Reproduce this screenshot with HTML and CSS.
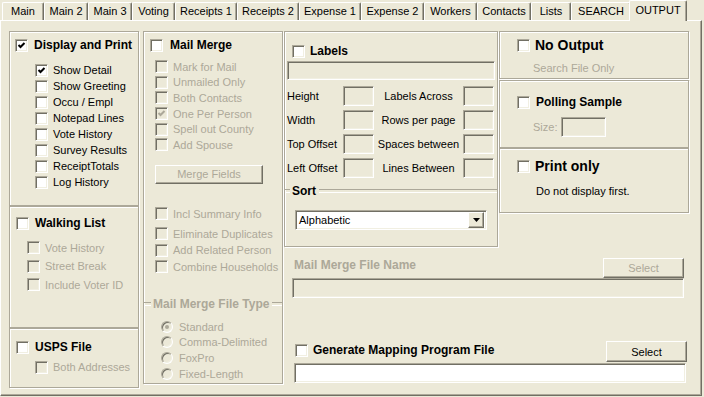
FILE: index.html
```html
<!DOCTYPE html>
<html lang="en">

<head>
    <meta charset="UTF-8">
    <meta name="viewport" content="width=device-width, initial-scale=1.0">
    <title>Output</title>
    <link rel="stylesheet" href="styles.css">
</head>

<body>
    <div class="tabs">
        <div class="tab">Main</div>
        <div class="tab">Main 2</div>
        <div class="tab">Main 3</div>
        <div class="tab">Voting</div>
        <div class="tab">Receipts 1</div>
        <div class="tab">Receipts 2</div>
        <div class="tab">Expense 1</div>
        <div class="tab">Expense 2</div>
        <div class="tab">Workers</div>
        <div class="tab">Contacts</div>
        <div class="tab">Lists</div>
        <div class="tab">SEARCH</div>
        <div class="tab active">OUTPUT</div>
    </div>

    <div class="page">
        <!-- coluna da esquerda -->
        <div class="col-left">
            <div class="frame display">
                <div class="row head">
                    <span class="cb"><svg width="11" height="11" viewBox="0 0 11 11"><path d="M2.5 5l2 2 4-4" fill="none" stroke="currentColor" stroke-width="2"/></svg></span>
                    <b>Display and Print</b>
                </div>
                <div class="list">
                    <div class="row"><span class="cb"><svg width="11" height="11" viewBox="0 0 11 11"><path d="M2.5 5l2 2 4-4" fill="none" stroke="currentColor" stroke-width="2"/></svg></span><span>Show Detail</span></div>
                    <div class="row"><span class="cb"></span><span>Show Greeting</span></div>
                    <div class="row"><span class="cb"></span><span>Occu / Empl</span></div>
                    <div class="row"><span class="cb"></span><span>Notepad Lines</span></div>
                    <div class="row"><span class="cb"></span><span>Vote History</span></div>
                    <div class="row"><span class="cb"></span><span>Survey Results</span></div>
                    <div class="row"><span class="cb"></span><span>ReceiptTotals</span></div>
                    <div class="row"><span class="cb"></span><span>Log History</span></div>
                </div>
            </div>

            <div class="frame walking">
                <div class="row head"><span class="cb"></span><b>Walking List</b></div>
                <div class="list dis">
                    <div class="row"><span class="cb"></span><span>Vote History</span></div>
                    <div class="row"><span class="cb"></span><span>Street Break</span></div>
                    <div class="row"><span class="cb"></span><span>Include Voter ID</span></div>
                </div>
            </div>

            <div class="frame usps">
                <div class="row head"><span class="cb"></span><b>USPS File</b></div>
                <div class="list dis">
                    <div class="row"><span class="cb"></span><span>Both Addresses</span></div>
                </div>
            </div>
        </div>

        <!-- mail merge -->
        <div class="frame merge">
            <div class="row head"><span class="cb"></span><b>Mail Merge</b></div>
            <div class="list list1 dis">
                <div class="row"><span class="cb"></span><span>Mark for Mail</span></div>
                <div class="row"><span class="cb"></span><span>Unmailed Only</span></div>
                <div class="row"><span class="cb"></span><span>Both Contacts</span></div>
                <div class="row"><span class="cb"><svg width="11" height="11" viewBox="0 0 11 11"><path d="M2.5 5l2 2 4-4" fill="none" stroke="currentColor" stroke-width="2"/></svg></span><span>One Per Person</span></div>
                <div class="row"><span class="cb"></span><span>Spell out County</span></div>
                <div class="row"><span class="cb"></span><span>Add Spouse</span></div>
            </div>
            <div class="btn dis merge-fields">Merge Fields</div>
            <div class="row incl dis"><span class="cb"></span><span>Incl Summary Info</span></div>
            <div class="list list2 dis">
                <div class="row"><span class="cb"></span><span>Eliminate Duplicates</span></div>
                <div class="row"><span class="cb"></span><span>Add Related Person</span></div>
                <div class="row"><span class="cb"></span><span>Combine Households</span></div>
            </div>
            <div class="legend dis">Mail Merge File Type</div>
            <div class="list radios dis">
                <div class="row"><span class="radio on"></span><span>Standard</span></div>
                <div class="row"><span class="radio"></span><span>Comma-Delimited</span></div>
                <div class="row"><span class="radio"></span><span>FoxPro</span></div>
                <div class="row"><span class="radio"></span><span>Fixed-Length</span></div>
            </div>
        </div>

        <div class="right">
            <div class="right-top">
                <!-- etiquetas + ordenacao -->
                <div class="frame labels">
                    <div class="row head"><span class="cb"></span><b>Labels</b></div>
                    <div class="field labels-name"></div>
                    <div class="label-grid">
                        <span>Height</span><span class="field box"></span>
                        <span class="mid">Labels Across</span><span class="field box"></span>
                        <span>Width</span><span class="field box"></span>
                        <span class="mid">Rows per page</span><span class="field box"></span>
                        <span>Top Offset</span><span class="field box"></span>
                        <span class="mid">Spaces between</span><span class="field box"></span>
                        <span>Left Offset</span><span class="field box"></span>
                        <span class="mid">Lines Between</span><span class="field box"></span>
                    </div>
                    <div class="legend sort">Sort</div>
                    <div class="field white select">
                        <span>Alphabetic</span>
                        <span class="btn arrow"><svg width="7" height="4" viewBox="0 0 7 4"><path d="M0 0h7l-3.5 4z" fill="#000"/></svg></span>
                    </div>
                </div>

                <div class="col-opts">
                    <div class="frame noout">
                        <div class="row head big"><span class="cb"></span><b>No Output</b></div>
                        <div class="note dis">Search File Only</div>
                    </div>
                    <div class="frame polling">
                        <div class="row head"><span class="cb"></span><b>Polling Sample</b></div>
                        <div class="size-row dis"><span>Size:</span><span class="field size-box"></span></div>
                    </div>
                    <div class="frame print">
                        <div class="row head big"><span class="cb"></span><b>Print only</b></div>
                        <div class="note">Do not display first.</div>
                    </div>
                </div>
            </div>

            <!-- arquivos -->
            <div class="files">
                <div class="file-row dis">
                    <b class="file-label">Mail Merge File Name</b>
                    <span class="btn select-btn">Select</span>
                </div>
                <div class="field file-field"></div>

                <div class="file-row map-row">
                    <div class="row head"><span class="cb"></span><b>Generate Mapping Program File</b></div>
                    <span class="btn select-btn map-btn">Select</span>
                </div>
                <div class="field white file-field map-field"></div>
            </div>
        </div>
    </div>
</body>

</html>
```

FILE: styles.css
```css
* {
    box-sizing: border-box;
}

body {
    margin: 0;
    width: 704px;
    height: 397px;
    overflow: hidden;
    background: #ece9d8;
    font-family: "Liberation Sans", Arial, sans-serif;
    font-size: 11px;
    color: #000;
}

/* abas */
.tabs {
    display: flex;
    height: 20px;
    padding-left: 2px;
}

.tab {
    height: 18px;
    margin-top: 2px;
    border-top: 1px solid #fff;
    border-left: 1px solid #fff;
    border-right: 1px solid #716f64;
    box-shadow: inset -1px 0 #aca899;
    border-radius: 2px 2px 0 0;
    text-align: center;
    line-height: 17px;
    white-space: nowrap;
}

.tab:nth-child(1) { width: 42px; }
.tab:nth-child(2) { width: 44px; }
.tab:nth-child(3) { width: 44px; }
.tab:nth-child(4) { width: 43px; }
.tab:nth-child(5) { width: 62px; }
.tab:nth-child(6) { width: 62px; }
.tab:nth-child(7) { width: 62px; }
.tab:nth-child(8) { width: 63px; }
.tab:nth-child(9) { width: 53px; }
.tab:nth-child(10) { width: 54px; }
.tab:nth-child(11) { width: 40px; }
.tab:nth-child(12) { width: 60px; }

.tab.active {
    position: relative; /* fica por cima da borda da pagina */
    z-index: 1;
    width: 58px;
    height: 21px;
    margin: 0 -2px -1px;
    background: #ece9d8;
    line-height: 18px;
}

/* pagina */
.page {
    display: flex;
    width: 702px;
    height: 376px;
    padding: 10px 0 0 8px;
    border-top: 1px solid #fff;
    border-left: 1px solid #fff;
    border-right: 1px solid #716f64;
    border-bottom: 1px solid #716f64;
    box-shadow: inset -1px -1px #aca899;
}

.frame {
    border: 1px solid #aca899;
    box-shadow: inset 1px 1px #fff, 1px 1px #fff;
}

.row {
    display: flex;
    align-items: center;
    height: 16px;
    white-space: nowrap;
}

.row .cb + span {
    margin-left: 5px;
}

.head b {
    font-size: 12px;
    margin-left: 6px;
}

.head.big b {
    font-size: 14px;
    margin-left: 5px;
}

.dis {
    color: #aca899;
}

/* checkbox classico */
.cb {
    display: flex;
    flex: none;
    width: 13px;
    height: 13px;
    background: #fff;
    border: 1px solid;
    border-color: #aca899 #fff #fff #aca899;
    box-shadow: inset 1px 1px #716f64, inset -1px -1px #f1efe2;
}

.dis .cb {
    background: #ece9d8;
}

.radio {
    display: flex;
    align-items: center;
    justify-content: center;
    flex: none;
    width: 12px;
    height: 12px;
    border-radius: 50%;
    background: #ece9d8;
    border: 1px solid;
    border-color: #aca899 #fff #fff #aca899;
    box-shadow: inset 1px 1px #716f64, inset -1px -1px #f1efe2;
}

.radio.on::after {
    content: '';
    width: 4px;
    height: 4px;
    border-radius: 50%;
    background: #aca899;
}

.radio + span {
    margin-left: 6px;
}

.btn {
    display: flex;
    align-items: center;
    justify-content: center;
    background: #ece9d8;
    border: 1px solid;
    border-color: #fff #716f64 #716f64 #fff;
    box-shadow: inset -1px -1px #aca899;
}

.field {
    background: #ece9d8;
    border: 1px solid;
    border-color: #aca899 #fff #fff #aca899;
    box-shadow: inset 1px 1px #716f64, inset -1px -1px #f1efe2;
}

.field.white {
    background: #fff;
}

.legend {
    display: flex;
    align-items: center;
    height: 14px;
    font-size: 12px;
    font-weight: bold;
    white-space: nowrap;
}

.legend::before,
.legend::after {
    content: '';
    height: 2px;
    border-top: 1px solid #aca899;
    border-bottom: 1px solid #fff;
}

.legend::before {
    width: 7px;
    margin-right: 2px;
}

.legend::after {
    flex: 1;
    margin-left: 3px;
}

/* coluna esquerda */
.col-left {
    display: flex;
    flex-direction: column;
    width: 130px;
}

.display {
    height: 175px;
}

.display .head {
    margin: 5px 0 0 5px;
}

.display .list {
    margin: 9px 0 0 25px;
}

.walking {
    height: 122px;
}

.walking .head {
    margin: 7px 0 0 6px;
}

.walking .list {
    margin: 6px 0 0 17px;
}

.walking .row {
    height: 18.5px;
}

.usps {
    height: 60px;
}

.usps .head {
    margin: 10px 0 0 6px;
}

.usps .list {
    margin: 4px 0 0 25px;
}

/* mail merge */
.merge {
    width: 140px;
    height: 353px;
    margin-left: 4px;
}

.merge .head {
    margin: 5px 0 0 6px;
}

.merge .head b {
    margin-left: 7px;
}

.merge .list1 {
    margin: 6px 0 0 11px;
}

.merge .list1 .row {
    height: 15.6px;
}

.merge-fields {
    width: 108px;
    height: 19px;
    margin: 12px 0 0 11px;
}

.incl {
    margin: 22px 0 0 11px;
}

.merge .list2 {
    margin: 4px 0 0 11px;
}

.merge .list2 .row {
    height: 16.5px;
}

.merge .legend {
    margin-top: 22px;
}

.radios {
    margin: 8px 0 0 17px;
}

.radios .row {
    height: 15.6px;
}

/* lado direito */
.right {
    display: flex;
    flex-direction: column;
    width: 417px;
    margin-left: 1px;
}

.right-top {
    display: flex;
    align-items: flex-start;
}

.labels {
    width: 214px;
    height: 216px;
}

.labels .head {
    margin: 11px 0 0 7px;
}

.labels .head b {
    margin-left: 5px;
}

.labels-name {
    width: 208px;
    height: 19px;
    margin: 2px 0 0 2px;
}

.label-grid {
    display: grid;
    grid-template-columns: 56px 31px 89px 31px;
    grid-auto-rows: 24px;
    align-items: center;
    margin: 4px 0 0 2px;
    white-space: nowrap;
}

.label-grid .box {
    height: 20px;
}

.label-grid .mid {
    text-align: center;
}

.legend.sort {
    margin-top: 4px;
}

.legend.sort::before {
    width: 5px;
}

.select {
    display: flex;
    align-items: center;
    width: 192px;
    height: 20px;
    margin: 12px 0 0 10px;
    padding: 0 2px 0 3px;
}

.arrow {
    width: 16px;
    height: 16px;
    margin-left: auto;
}

.col-opts {
    display: flex;
    flex-direction: column;
    width: 190px;
    margin-left: 1px;
}

.col-opts .head {
    margin: 5px 0 0 17px;
}

.note {
    height: 14px;
    line-height: 14px;
    margin: 8px 0 0 33px;
}

.noout {
    height: 48px;
}

.polling {
    height: 68px;
    margin-top: 1px;
}

.polling .head {
    margin-top: 13px;
}

.size-row {
    display: flex;
    align-items: center;
    height: 20px;
    margin: 7px 0 0 33px;
}

.size-box {
    width: 45px;
    height: 20px;
    margin-left: 4px;
}

.print {
    height: 65px;
}

.print .head {
    margin-top: 9px;
}

.print .note {
    margin: 10px 0 0 36px;
}

/* arquivos */
.files {
    padding: 11px 0 0 8px;
}

.file-row {
    display: flex;
    align-items: flex-start;
    width: 392px;
    height: 20px;
}

.file-label {
    font-size: 12px;
    line-height: 14px;
    margin-left: 2px;
}

.select-btn {
    width: 81px;
    height: 20px;
    margin-left: auto;
}

.file-field {
    width: 392px;
    height: 20px;
}

.map-row {
    width: 393px;
    height: 21px;
    margin: 43px 0 0 2px;
    color: #000;
}

.map-row .head {
    margin: 1px 0 0 1px;
}

.map-row .head b {
    margin-left: 5px;
}

.map-btn {
    height: 21px;
}

.map-field {
    margin: 1px 0 0 2px;
}
```
